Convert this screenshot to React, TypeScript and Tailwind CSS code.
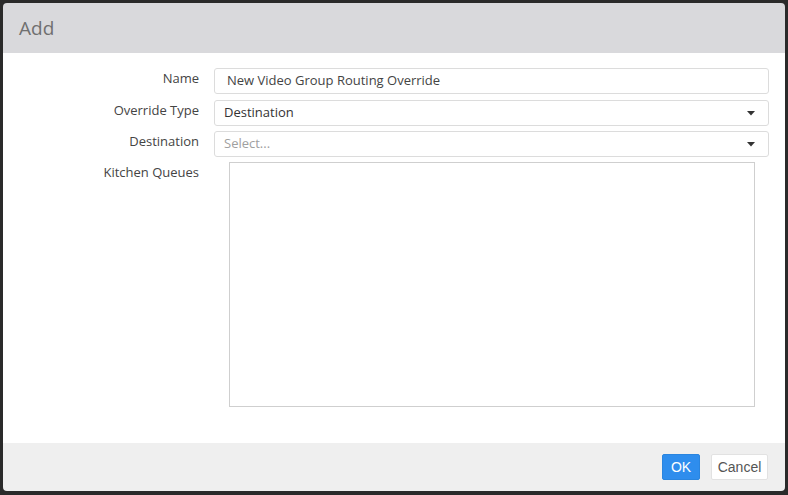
import React from 'react'

function Caret() {
  return (
    <svg width="8" height="5" viewBox="0 0 8 5" className="shrink-0">
      <path d="M0 0 L8 0 L4 4.5 Z" fill="#333" />
    </svg>
  )
}

function Row({ label, className = '', children }: { label: string; className?: string; children: React.ReactNode }) {
  return (
    <div className={`flex items-start ${className}`}>
      <div className="w-[196px] shrink-0 text-right text-[13px] leading-[20px] text-[#444]">{label}</div>
      <div className="ml-[15px] flex-1">{children}</div>
    </div>
  )
}

export default function App() {
  return (
    <div
      className="h-[495px] w-[788px] bg-[#2a2a2a] pt-[3px] pb-[4px] pl-[3px] pr-[3px]"
      style={{ fontFamily: '"Open Sans", "Noto Sans", sans-serif' }}
    >
      <div className="flex h-full flex-col overflow-hidden rounded-[4px]">
        <div className="flex h-[50px] shrink-0 items-center bg-[#d9d9dc] px-[16px]">
          <span className="text-[19px] text-[#707070]">Add</span>
        </div>

        <div className="flex flex-1 flex-col bg-white pt-[15px] pr-[16px]">
          <Row label="Name">
            <div className="flex h-[26px] items-center rounded-[3px] border border-[#dcdcdc] px-[12px] text-[13px] text-[#444]">
              New Video Group Routing Override
            </div>
          </Row>
          <Row label="Override Type" className="mt-[6px]">
            <div className="flex h-[26px] items-center justify-between rounded-[3px] border border-[#dcdcdc] pl-[9px] pr-[13px] text-[13px] text-[#333]">
              <span>Destination</span>
              <Caret />
            </div>
          </Row>
          <Row label="Destination" className="mt-[5px]">
            <div className="flex h-[26px] items-center justify-between rounded-[3px] border border-[#dcdcdc] pl-[9px] pr-[13px] text-[13px] text-[#a0a0a0]">
              <span>Select...</span>
              <Caret />
            </div>
          </Row>
          <Row label="Kitchen Queues" className="mt-[5px]">
            <div className="ml-[15px] mr-[14px] h-[245px] border border-[#cfcfcf] bg-white" />
          </Row>
        </div>

        <div
          className="flex h-[48px] shrink-0 items-center justify-end gap-[11px] bg-[#efefef] pr-[17px]"
          style={{ fontFamily: '"Liberation Sans", Arial, sans-serif' }}
        >
          <button className="h-[26px] w-[38px] rounded-[2px] border border-[#2a85df] bg-[#2e8ded] text-[14px] text-white">
            OK
          </button>
          <button className="h-[26px] w-[57px] rounded-[2px] border border-[#e2e2e2] bg-white text-[14px] text-[#555]">
            Cancel
          </button>
        </div>
      </div>
    </div>
  )
}
